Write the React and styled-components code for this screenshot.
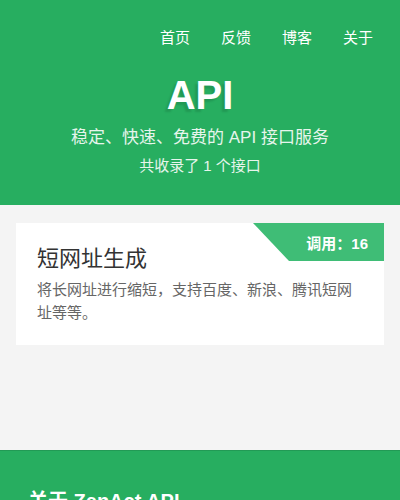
import styled, { createGlobalStyle } from "styled-components";

const GlobalStyle = createGlobalStyle`
  body {
    margin: 0;
    background: #f4f4f4;
    font-family: "Liberation Sans", "Noto Sans CJK SC", sans-serif;
  }
`;

const Header = styled.header`
  background-color: #27ae60;
  color: #fff;
  padding: 27px 0 28px;
  text-align: center;
`;

const Nav = styled.nav`
  display: flex;
  justify-content: flex-end;
  gap: 31px;
  padding-right: 27px;
`;

const NavLink = styled.a`
  color: #fff;
  font-size: 15px;
  line-height: 22px;
  text-decoration: none;
`;

const Title = styled.h1`
  margin: 22px 0 0;
  font-size: 40px;
  line-height: 48px;
  font-weight: bold;
  text-shadow: -3px 3px 2px rgba(0, 0, 0, 0.12);
`;

const Subtitle = styled.p`
  margin: 7px 0 0;
  font-size: 17px;
  line-height: 24px;
  color: #e6f5ec;
`;

const Count = styled.p`
  margin: 5px 0 0;
  font-size: 15px;
  line-height: 22px;
  color: #e6f5ec;
`;

const Main = styled.main`
  padding: 18px 16px 105px;
`;

const Card = styled.div`
  position: relative;
  background: #fff;
  padding: 21px 21px 21px;
`;

const Ribbon = styled.div`
  position: absolute;
  top: 0;
  right: 0;
  width: 131px;
  height: 38px;
  background: #3fbd76;
  clip-path: polygon(0 0, 100% 0, 100% 100%, 36px 100%);
  color: #fff;
  font-size: 15px;
  font-weight: bold;
  display: flex;
  align-items: center;
  justify-content: flex-end;
  padding-right: 16px;
  box-sizing: border-box;
`;

const CardTitle = styled.h3`
  margin: 0;
  font-size: 22px;
  line-height: 30px;
  font-weight: normal;
  color: #333;
`;

const CardDesc = styled.p`
  margin: 4px 0 0;
  font-size: 15px;
  line-height: 23px;
  color: #666;
  padding-right: 10px;
`;

const Footer = styled.footer`
  background-color: #27ae60;
  border-top: 1px solid #229a55;
  padding: 37px 28px 30px;
  color: #fff;
`;

const FooterTitle = styled.h2`
  margin: 0;
  font-size: 20px;
  line-height: 26px;
  font-weight: bold;
`;

export default function App() {
  const navItems = ["首页", "反馈", "博客", "关于"];
  return (
    <>
      <GlobalStyle />
      <Header>
        <Nav>
          {navItems.map((item) => (
            <NavLink key={item} href="#">
              {item}
            </NavLink>
          ))}
        </Nav>
        <Title>API</Title>
        <Subtitle>稳定、快速、免费的 API 接口服务</Subtitle>
        <Count>共收录了 1 个接口</Count>
      </Header>
      <Main>
        <Card>
          <Ribbon>调用：16</Ribbon>
          <CardTitle>短网址生成</CardTitle>
          <CardDesc>将长网址进行缩短，支持百度、新浪、腾讯短网址等等。</CardDesc>
        </Card>
      </Main>
      <Footer>
        <FooterTitle>关于 ZenAct API</FooterTitle>
      </Footer>
    </>
  );
}
